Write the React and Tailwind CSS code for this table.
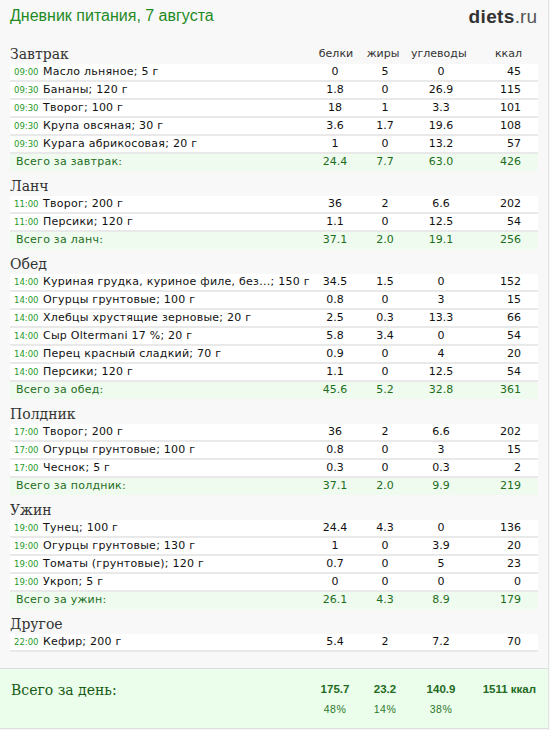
const meals = [
  {
    title: 'Завтрак',
    items: [
      ['09:00', 'Масло льняное; 5 г', '0', '5', '0', '45'],
      ['09:30', 'Бананы; 120 г', '1.8', '0', '26.9', '115'],
      ['09:30', 'Творог; 100 г', '18', '1', '3.3', '101'],
      ['09:30', 'Крупа овсяная; 30 г', '3.6', '1.7', '19.6', '108'],
      ['09:30', 'Курага абрикосовая; 20 г', '1', '0', '13.2', '57'],
    ],
    total: ['Всего за завтрак:', '24.4', '7.7', '63.0', '426'],
  },
  {
    title: 'Ланч',
    items: [
      ['11:00', 'Творог; 200 г', '36', '2', '6.6', '202'],
      ['11:00', 'Персики; 120 г', '1.1', '0', '12.5', '54'],
    ],
    total: ['Всего за ланч:', '37.1', '2.0', '19.1', '256'],
  },
  {
    title: 'Обед',
    items: [
      ['14:00', 'Куриная грудка, куриное филе, без...; 150 г', '34.5', '1.5', '0', '152'],
      ['14:00', 'Огурцы грунтовые; 100 г', '0.8', '0', '3', '15'],
      ['14:00', 'Хлебцы хрустящие зерновые; 20 г', '2.5', '0.3', '13.3', '66'],
      ['14:00', 'Сыр Oltermani 17 %; 20 г', '5.8', '3.4', '0', '54'],
      ['14:00', 'Перец красный сладкий; 70 г', '0.9', '0', '4', '20'],
      ['14:00', 'Персики; 120 г', '1.1', '0', '12.5', '54'],
    ],
    total: ['Всего за обед:', '45.6', '5.2', '32.8', '361'],
  },
  {
    title: 'Полдник',
    items: [
      ['17:00', 'Творог; 200 г', '36', '2', '6.6', '202'],
      ['17:00', 'Огурцы грунтовые; 100 г', '0.8', '0', '3', '15'],
      ['17:00', 'Чеснок; 5 г', '0.3', '0', '0.3', '2'],
    ],
    total: ['Всего за полдник:', '37.1', '2.0', '9.9', '219'],
  },
  {
    title: 'Ужин',
    items: [
      ['19:00', 'Тунец; 100 г', '24.4', '4.3', '0', '136'],
      ['19:00', 'Огурцы грунтовые; 130 г', '1', '0', '3.9', '20'],
      ['19:00', 'Томаты (грунтовые); 120 г', '0.7', '0', '5', '23'],
      ['19:00', 'Укроп; 5 г', '0', '0', '0', '0'],
    ],
    total: ['Всего за ужин:', '26.1', '4.3', '8.9', '179'],
  },
  {
    title: 'Другое',
    items: [['22:00', 'Кефир; 200 г', '5.4', '2', '7.2', '70']],
  },
]

function Cols({ values, className = '' }) {
  return (
    <>
      <div className={`w-[50px] text-center ${className}`}>{values[0]}</div>
      <div className={`w-[50px] text-center ${className}`}>{values[1]}</div>
      <div className={`w-[62px] text-center ${className}`}>{values[2]}</div>
      <div className={`w-[65px] text-right pr-[16px] ${className}`}>{values[3]}</div>
    </>
  )
}

function Meal({ meal, first }) {
  return (
    <div>
      <div className={`flex items-end ${first ? 'h-[32px]' : 'h-[25px]'}`}>
        <div className="flex-1 font-['DejaVu_Serif',serif] text-[14px] leading-[20px] text-[#333]">
          {meal.title}
        </div>
        {first && (
          <div className="flex text-[11px] leading-[20px] text-[#333]">
            <div className="w-[50px] text-center">белки</div>
            <div className="w-[50px] text-center pr-[6px]">жиры</div>
            <div className="w-[62px] text-center pr-[10px]">углеводы</div>
            <div className="w-[65px] text-right pr-[16px]">ккал</div>
          </div>
        )}
      </div>
      {meal.items.map((it, i) => (
        <div
          key={i}
          className="flex h-[18px] items-center bg-white border-b-2 border-[#e9e9e9] text-[11px] text-[#111] whitespace-nowrap"
        >
          <div className="w-[300px] flex items-center pl-[4px]">
            <span className="w-[29px] text-[8.5px] text-[#1f9a1f]">{it[0]}</span>
            <span className="tracking-[0.25px]">{it[1]}</span>
          </div>
          <Cols values={it.slice(2)} />
        </div>
      ))}
      {meal.total && (
        <div className="flex h-[17px] items-center bg-[#effbef] text-[11px] text-[#1d6e1d] whitespace-nowrap">
          <div className="w-[300px] pl-[6px] tracking-[0.25px]">{meal.total[0]}</div>
          <Cols values={meal.total.slice(1)} />
        </div>
      )}
    </div>
  )
}

export default function App() {
  return (
    <div className="w-[550px] h-[730px] overflow-hidden bg-[#f8f8f8] font-['DejaVu_Sans',sans-serif]">
      <div className="w-[549px] h-[730px] border-r border-[#e3e3e3] flex flex-col">
        <div className="flex items-center justify-between h-[32px] px-[10px]">
          <div className="font-['Liberation_Sans',sans-serif] text-[16px] text-[#1f8a1f]">
            Дневник питания, 7 августа
          </div>
          <div className="font-['Liberation_Sans',sans-serif] text-[19px] leading-none pr-[1px]">
            <span className="font-bold text-[#333] tracking-[0.4px]">diets</span>
            <span className="text-[#555]">.ru</span>
          </div>
        </div>
        <div className="px-[10px]">
          {meals.map((m, i) => (
            <Meal key={m.title} meal={m} first={i === 0} />
          ))}
        </div>
        <div className="mt-[16px] h-[61px] border-y border-[#dddddd] bg-[#ebfdeb] px-[10px] pt-[11px]">
          <div className="flex items-center h-[20px]">
            <div className="w-[300px] pl-[1px] font-['DejaVu_Serif',serif] text-[14px] text-[#155c15]">
              Всего за день:
            </div>
            <div className="flex font-['Liberation_Sans',sans-serif] font-bold text-[11.5px] text-[#1f6b1f]">
              <div className="w-[50px] text-center">175.7</div>
              <div className="w-[50px] text-center">23.2</div>
              <div className="w-[62px] text-center">140.9</div>
              <div className="w-[65px] text-right pr-[1px]">1511 ккал</div>
            </div>
          </div>
          <div className="flex items-center h-[20px] font-['Liberation_Sans',sans-serif] text-[10.5px] text-[#2d7a2d] tracking-[0.5px]">
            <div className="w-[300px]" />
            <div className="w-[50px] text-center">48%</div>
            <div className="w-[50px] text-center">14%</div>
            <div className="w-[62px] text-center">38%</div>
          </div>
        </div>
      </div>
    </div>
  )
}
